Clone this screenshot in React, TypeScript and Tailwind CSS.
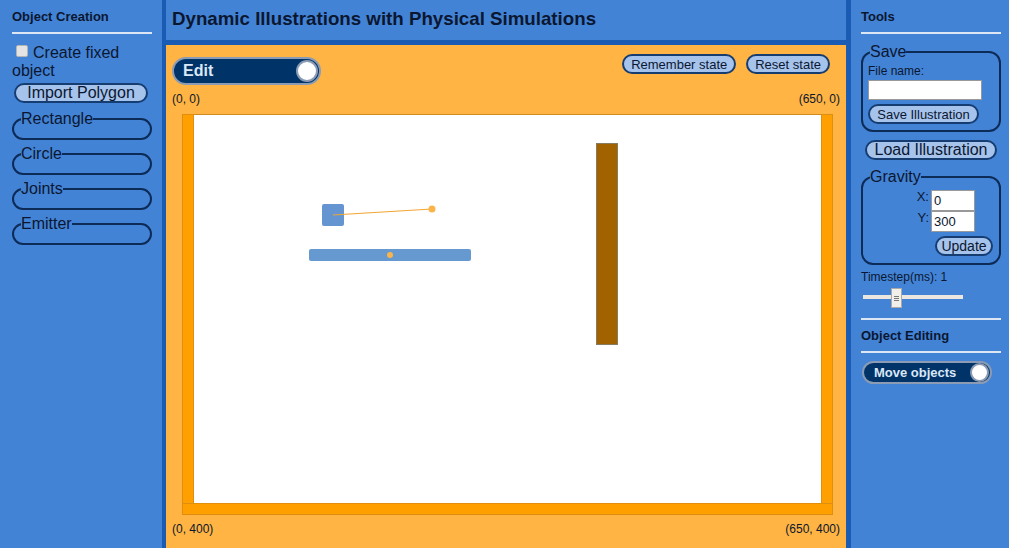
import { useState } from 'react'

function Toggle({ label, className, knob }: { label: string; className: string; knob: string }) {
  return (
    <div
      className={`flex items-center justify-between rounded-full border-2 border-[#8a9bb3] bg-[#003468] pr-[1px] font-bold text-[#dbe7f7] ${className}`}
    >
      <span>{label}</span>
      <span className={`rounded-full border-2 border-[#8a9bb3] bg-white ${knob}`} />
    </div>
  )
}

function Pill({ children, className = '' }: { children: React.ReactNode; className?: string }) {
  return (
    <button
      className={`rounded-full border-2 border-[#163d72] bg-[#a6c3ec] leading-none text-[#0b1730] ${className}`}
    >
      {children}
    </button>
  )
}

function Group({ title, children, className = '' }: { title: string; children?: React.ReactNode; className?: string }) {
  return (
    <fieldset className={`rounded-[12px] border-2 border-[#0d2b57] px-[5px] ${className}`}>
      <legend className="ml-[2px] px-0 text-[16px] leading-[18px]">{title}</legend>
      {children}
    </fieldset>
  )
}

function Scene() {
  return (
    <svg width="651" height="401" viewBox="0 0 651 401" className="block">
      <rect x="0.5" y="0.5" width="650" height="400" fill="#ffffff" stroke="#d08a20" />
      <rect x="0.5" y="0.5" width="11" height="400" fill="#ff9f00" stroke="#e08e10" />
      <rect x="639.5" y="0.5" width="11" height="400" fill="#ff9f00" stroke="#e08e10" />
      <rect x="0.5" y="389.5" width="650" height="11" fill="#ff9f00" stroke="#e08e10" />
      <rect x="140" y="90" width="22" height="22" rx="2" fill="#6495d0" />
      <line x1="151" y1="101" x2="250" y2="95" stroke="#f2a530" strokeWidth="1" />
      <circle cx="250" cy="95" r="3.5" fill="#fbb44a" />
      <rect x="127" y="135" width="162" height="12" rx="2" fill="#6699d0" />
      <circle cx="208" cy="141" r="3" fill="#fbb44a" />
      <rect x="414.5" y="29.5" width="21" height="201" fill="#a36200" stroke="#8a7a62" />
    </svg>
  )
}

export default function App() {
  const [fixed, setFixed] = useState(false)

  return (
    <div className="flex h-[548px] w-[1009px] overflow-hidden font-['Liberation_Sans',Arial,sans-serif] text-[#0b1730]">
      {/* left sidebar */}
      <aside className="w-[162px] shrink-0 bg-[#4383d6] pl-[12px] pr-[10px] pt-[9px]">
        <h3 className="text-[13px] font-bold leading-[15px]">Object Creation</h3>
        <hr className="mt-[8px] border-t-2 border-[#dce6f4]" />
        <label className="mt-[10px] block text-[16px] leading-[18px]">
          <input
            type="checkbox"
            checked={fixed}
            onChange={() => setFixed(!fixed)}
            className="mr-[5px] ml-[4px] inline-block h-[12px] w-[12px] appearance-none rounded-[2px] border border-[#b5b5b5] bg-[#e4e4e4] align-[1px]"
          />
          Create fixed object
        </label>
        <Pill className="mt-[3px] ml-[2px] h-[20px] w-[134px] text-[16px]">Import Polygon</Pill>
        <div className="mt-[5px] flex flex-col gap-[5px]">
          {['Rectangle', 'Circle', 'Joints', 'Emitter'].map((t) => (
            <Group key={t} title={t} className="h-[30px]" />
          ))}
        </div>
      </aside>
      <div className="w-[4px] shrink-0 bg-[#1a5cb4]" />

      {/* center */}
      <main className="flex w-[680px] shrink-0 flex-col">
        <header className="flex h-[45px] shrink-0 items-center border-b-[5px] border-[#1a5cb4] bg-[#4383d6] pl-[6px] pb-[2px]">
          <h1 className="text-[18.72px] font-bold">Dynamic Illustrations with Physical Simulations</h1>
        </header>
        <section className="flex flex-1 flex-col bg-[#ffb443] px-[6px] pt-[9px]">
          <div className="flex items-start justify-between">
            <div className="mt-[3px]">
              <Toggle label="Edit" className="h-[28px] w-[149px] pl-[9px] text-[16px]" knob="h-[22px] w-[22px]" />
            </div>
            <div className="mr-[10px] flex gap-[10px] text-[13px]">
              <Pill className="h-[20px] px-[7px]">Remember state</Pill>
              <Pill className="h-[20px] px-[7px]">Reset state</Pill>
            </div>
          </div>
          <div className="mt-[7px] flex justify-between text-[12px] leading-[14px]">
            <span>(0, 0)</span>
            <span>(650, 0)</span>
          </div>
          <div className="mt-[8px] ml-[10px]">
            <Scene />
          </div>
          <div className="mt-[7px] flex justify-between text-[12px] leading-[14px]">
            <span>(0, 400)</span>
            <span>(650, 400)</span>
          </div>
        </section>
      </main>
      <div className="w-[5px] shrink-0 bg-[#1a5cb4]" />

      {/* right sidebar */}
      <aside className="w-[158px] shrink-0 bg-[#4383d6] pl-[10px] pr-[8px] pt-[9px]">
        <h3 className="text-[13px] font-bold leading-[15px]">Tools</h3>
        <hr className="mt-[8px] border-t-2 border-[#dce6f4]" />
        <Group title="Save" className="mt-[9px] h-[89px]">
          <div className="mt-[3px] text-[12px] leading-[14px]">File name:</div>
          <input className="mt-[2px] block h-[20px] w-[114px] border border-[#999] bg-white" />
          <Pill className="mt-[4px] h-[20px] w-[111px] text-[13px]">Save Illustration</Pill>
        </Group>
        <Pill className="mt-[8px] ml-[4px] h-[20px] w-[132px] text-[16px]">Load Illustration</Pill>
        <Group title="Gravity" className="mt-[6px] h-[97px]">
          <div className="mt-[4px] flex flex-col items-end pr-[19px]">
            <div className="flex items-start">
              <span className="mr-[2px] text-[13px] leading-[14px]">X:</span>
              <input defaultValue="0" className="h-[21px] w-[44px] border border-[#999] bg-white px-[2px] text-[13px]" />
            </div>
            <div className="flex items-start">
              <span className="mr-[2px] text-[13px] leading-[14px]">Y:</span>
              <input defaultValue="300" className="h-[21px] w-[44px] border border-[#999] bg-white px-[2px] text-[13px]" />
            </div>
          </div>
          <div className="mt-[4px] flex justify-end pr-[1px]">
            <Pill className="h-[20px] w-[58px] text-[14px]">Update</Pill>
          </div>
        </Group>
        <div className="mt-[5px] text-[12px] leading-[14px]">Timestep(ms): 1</div>
        <div className="relative mt-[4px] h-[20px] w-[102px]">
          <div className="absolute left-[2px] right-0 top-[7px] h-[4px] bg-[#ebe6df]" />
          <div className="absolute left-[30px] top-0 flex h-[20px] w-[11px] flex-col items-center justify-center gap-[1px] border border-[#aaa] bg-[#f2efea]">
            <span className="h-px w-[5px] bg-[#777]" />
            <span className="h-px w-[5px] bg-[#777]" />
            <span className="h-px w-[5px] bg-[#777]" />
          </div>
        </div>
        <hr className="mt-[10px] border-t-2 border-[#dce6f4]" />
        <h3 className="mt-[8px] text-[13px] font-bold leading-[15px]">Object Editing</h3>
        <hr className="mt-[8px] border-t-2 border-[#dce6f4]" />
        <div className="mt-[8px] ml-[1px]">
          <Toggle label="Move objects" className="h-[23px] w-[130px] pl-[10px] text-[13px]" knob="h-[19px] w-[19px]" />
        </div>
      </aside>
    </div>
  )
}
